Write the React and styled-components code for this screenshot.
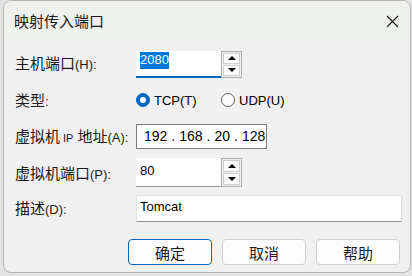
import React from "react";
import styled, { createGlobalStyle } from "styled-components";

const Global = createGlobalStyle`
  html, body {
    margin: 0;
    padding: 0;
    background: #e4e4e4;
    font-family: "Noto Sans CJK SC", "Liberation Sans", sans-serif;
  }
`;

const Page = styled.div`
  width: 412px;
  height: 276px;
  padding-left: 3px;
  box-sizing: border-box;
  overflow: hidden;
`;

const Window = styled.div`
  width: 408px;
  height: 273px;
  box-sizing: border-box;
  border: 1px solid #b4b4b4;
  border-radius: 8px;
  background: #f0f0f0;
  overflow: hidden;
  display: flex;
  flex-direction: column;
`;

const TitleBar = styled.div`
  height: 40px;
  flex: none;
  display: flex;
  align-items: center;
  justify-content: space-between;
  padding: 0 11px 0 10px;
  background: #eef1ec;
  font-size: 15px;
  color: #1a1a1a;
`;

const Title = styled.span`
  line-height: 1;
  margin-top: -2px;
`;

const Close = styled.span`
  display: flex;
  width: 14px;
  height: 14px;
  align-items: center;
  justify-content: center;
`;

const Body = styled.div`
  padding: 4px 9px 0 11px;
  display: flex;
  flex-direction: column;
`;

const Row = styled.div`
  height: ${(p) => p.$h}px;
  display: grid;
  grid-template-columns: 121px 1fr;
  align-items: center;
`;

const Label = styled.label`
  font-size: 15px;
  color: #1a1a1a;
  line-height: 1;
  white-space: nowrap;
  margin-top: ${(p) => p.$lift || 0}px;
`;

const Key = styled.span`
  font-family: "Liberation Sans", sans-serif;
  font-size: 13px;
`;

const Small = styled.span`
  font-family: "Liberation Sans", sans-serif;
  font-size: 11px;
  margin: 0 4px 0 3px;
`;

const Spin = styled.div`
  display: flex;
  align-items: stretch;
`;

const NumBox = styled.div`
  width: 85px;
  height: ${(p) => p.$h}px;
  box-sizing: border-box;
  background: #fff;
  border-bottom: ${(p) => (p.$focus ? "2px solid #0067c0" : "1px solid #9a9a9a")};
  padding: ${(p) => p.$pt}px 0 0 4px;
  font-family: "Liberation Sans", sans-serif;
  font-size: 13px;
  color: #000;
`;

const Selected = styled.span`
  display: inline-block;
  background: #0078d7;
  color: #fff;
  padding: 1px 0 2px;
  line-height: 14px;
`;

const Arrows = styled.div`
  width: 21px;
  box-sizing: border-box;
  border: 1px solid #adadad;
  padding: 1px;
  display: flex;
  flex-direction: column;
  gap: 1px;
  background: #f0f0f0;
`;

const ArrowBtn = styled.div`
  flex: 1;
  background: #fafafa;
  border: 1px solid #cfcfcf;
  display: flex;
  align-items: center;
  justify-content: center;
  &::before {
    content: "";
    width: 0;
    height: 0;
    border-left: 4px solid transparent;
    border-right: 4px solid transparent;
    ${(p) =>
      p.$down ? "border-top: 4px solid #000;" : "border-bottom: 4px solid #000;"}
  }
`;

const Radios = styled.div`
  display: flex;
  align-items: center;
`;

const RadioItem = styled.div`
  display: flex;
  align-items: center;
  gap: 4px;
  width: ${(p) => p.$w}px;
  font-family: "Liberation Sans", sans-serif;
  font-size: 13px;
  color: #000;
`;

const Dot = styled.span`
  width: 14px;
  height: 14px;
  box-sizing: border-box;
  border-radius: 50%;
  flex: none;
  display: flex;
  align-items: center;
  justify-content: center;
  background: ${(p) => (p.$on ? "#0067c0" : "#fbfbfb")};
  border: 1px solid ${(p) => (p.$on ? "#0067c0" : "#5f5f5f")};
  &::after {
    content: "";
    display: ${(p) => (p.$on ? "block" : "none")};
    width: 6px;
    height: 6px;
    border-radius: 50%;
    background: #fff;
  }
`;

const IpBox = styled.div`
  width: 131px;
  height: 25px;
  box-sizing: border-box;
  border: 1px solid #7a7a7a;
  background: #fff;
  display: flex;
  align-items: center;
  gap: 4px;
  padding-left: 7px;
  font-family: "Liberation Sans", sans-serif;
  font-size: 14px;
  color: #000;
`;

const TextBox = styled.div`
  width: 266px;
  height: 27px;
  box-sizing: border-box;
  background: #fff;
  border: 1px solid #e2e2e2;
  border-bottom-color: #8a8a8a;
  padding: 3px 0 0 3px;
  font-family: "Liberation Sans", sans-serif;
  font-size: 13px;
  color: #000;
`;

const Footer = styled.div`
  display: flex;
  justify-content: flex-end;
  gap: 10px;
  margin-top: 13px;
  padding-right: 1px;
`;

const Button = styled.button`
  width: 84px;
  height: 26px;
  box-sizing: border-box;
  border: 1px solid ${(p) => (p.$primary ? "#0067c0" : "#d0d0d0")};
  border-radius: 4px;
  background: #fdfdfd;
  font-family: "Noto Sans CJK SC", sans-serif;
  font-size: 15px;
  color: #1a1a1a;
  padding: 0;
  line-height: 1;
`;

function SpinField({ value, focus, h, pt }) {
  return (
    <Spin>
      <NumBox $focus={focus} $h={h} $pt={pt}>
        {focus ? <Selected>{value}</Selected> : value}
      </NumBox>
      <Arrows>
        <ArrowBtn />
        <ArrowBtn $down />
      </Arrows>
    </Spin>
  );
}

export default function App() {
  return (
    <Page>
      <Global />
      <Window>
        <TitleBar>
          <Title>映射传入端口</Title>
          <Close>
            <svg width="13" height="13" viewBox="0 0 13 13">
              <path d="M1 1 L12 12 M12 1 L1 12" stroke="#1a1a1a" strokeWidth="1.1" />
            </svg>
          </Close>
        </TitleBar>
        <Body>
          <Row $h={38}>
            <Label $lift={-3}>
              主机端口<Key>(H):</Key>
            </Label>
            <SpinField value="2080" focus h={27} pt={1} />
          </Row>
          <Row $h={34}>
            <Label>
              类型<Key>:</Key>
            </Label>
            <Radios>
              <RadioItem $w={85}>
                <Dot $on />
                TCP(T)
              </RadioItem>
              <RadioItem $w={70}>
                <Dot />
                UDP(U)
              </RadioItem>
            </Radios>
          </Row>
          <Row $h={38}>
            <Label>
              虚拟机<Small>IP</Small>地址<Key>(A):</Key>
            </Label>
            <IpBox>
              <span>192</span>
              <span>.</span>
              <span>168</span>
              <span>.</span>
              <span>20</span>
              <span>.</span>
              <span>128</span>
            </IpBox>
          </Row>
          <Row $h={35}>
            <Label>
              虚拟机端口<Key>(P):</Key>
            </Label>
            <SpinField value="80" h={29} pt={5} />
          </Row>
          <Row $h={36}>
            <Label>
              描述<Key>(D):</Key>
            </Label>
            <TextBox>Tomcat</TextBox>
          </Row>
          <Footer>
            <Button $primary>确定</Button>
            <Button>取消</Button>
            <Button>帮助</Button>
          </Footer>
        </Body>
      </Window>
    </Page>
  );
}
